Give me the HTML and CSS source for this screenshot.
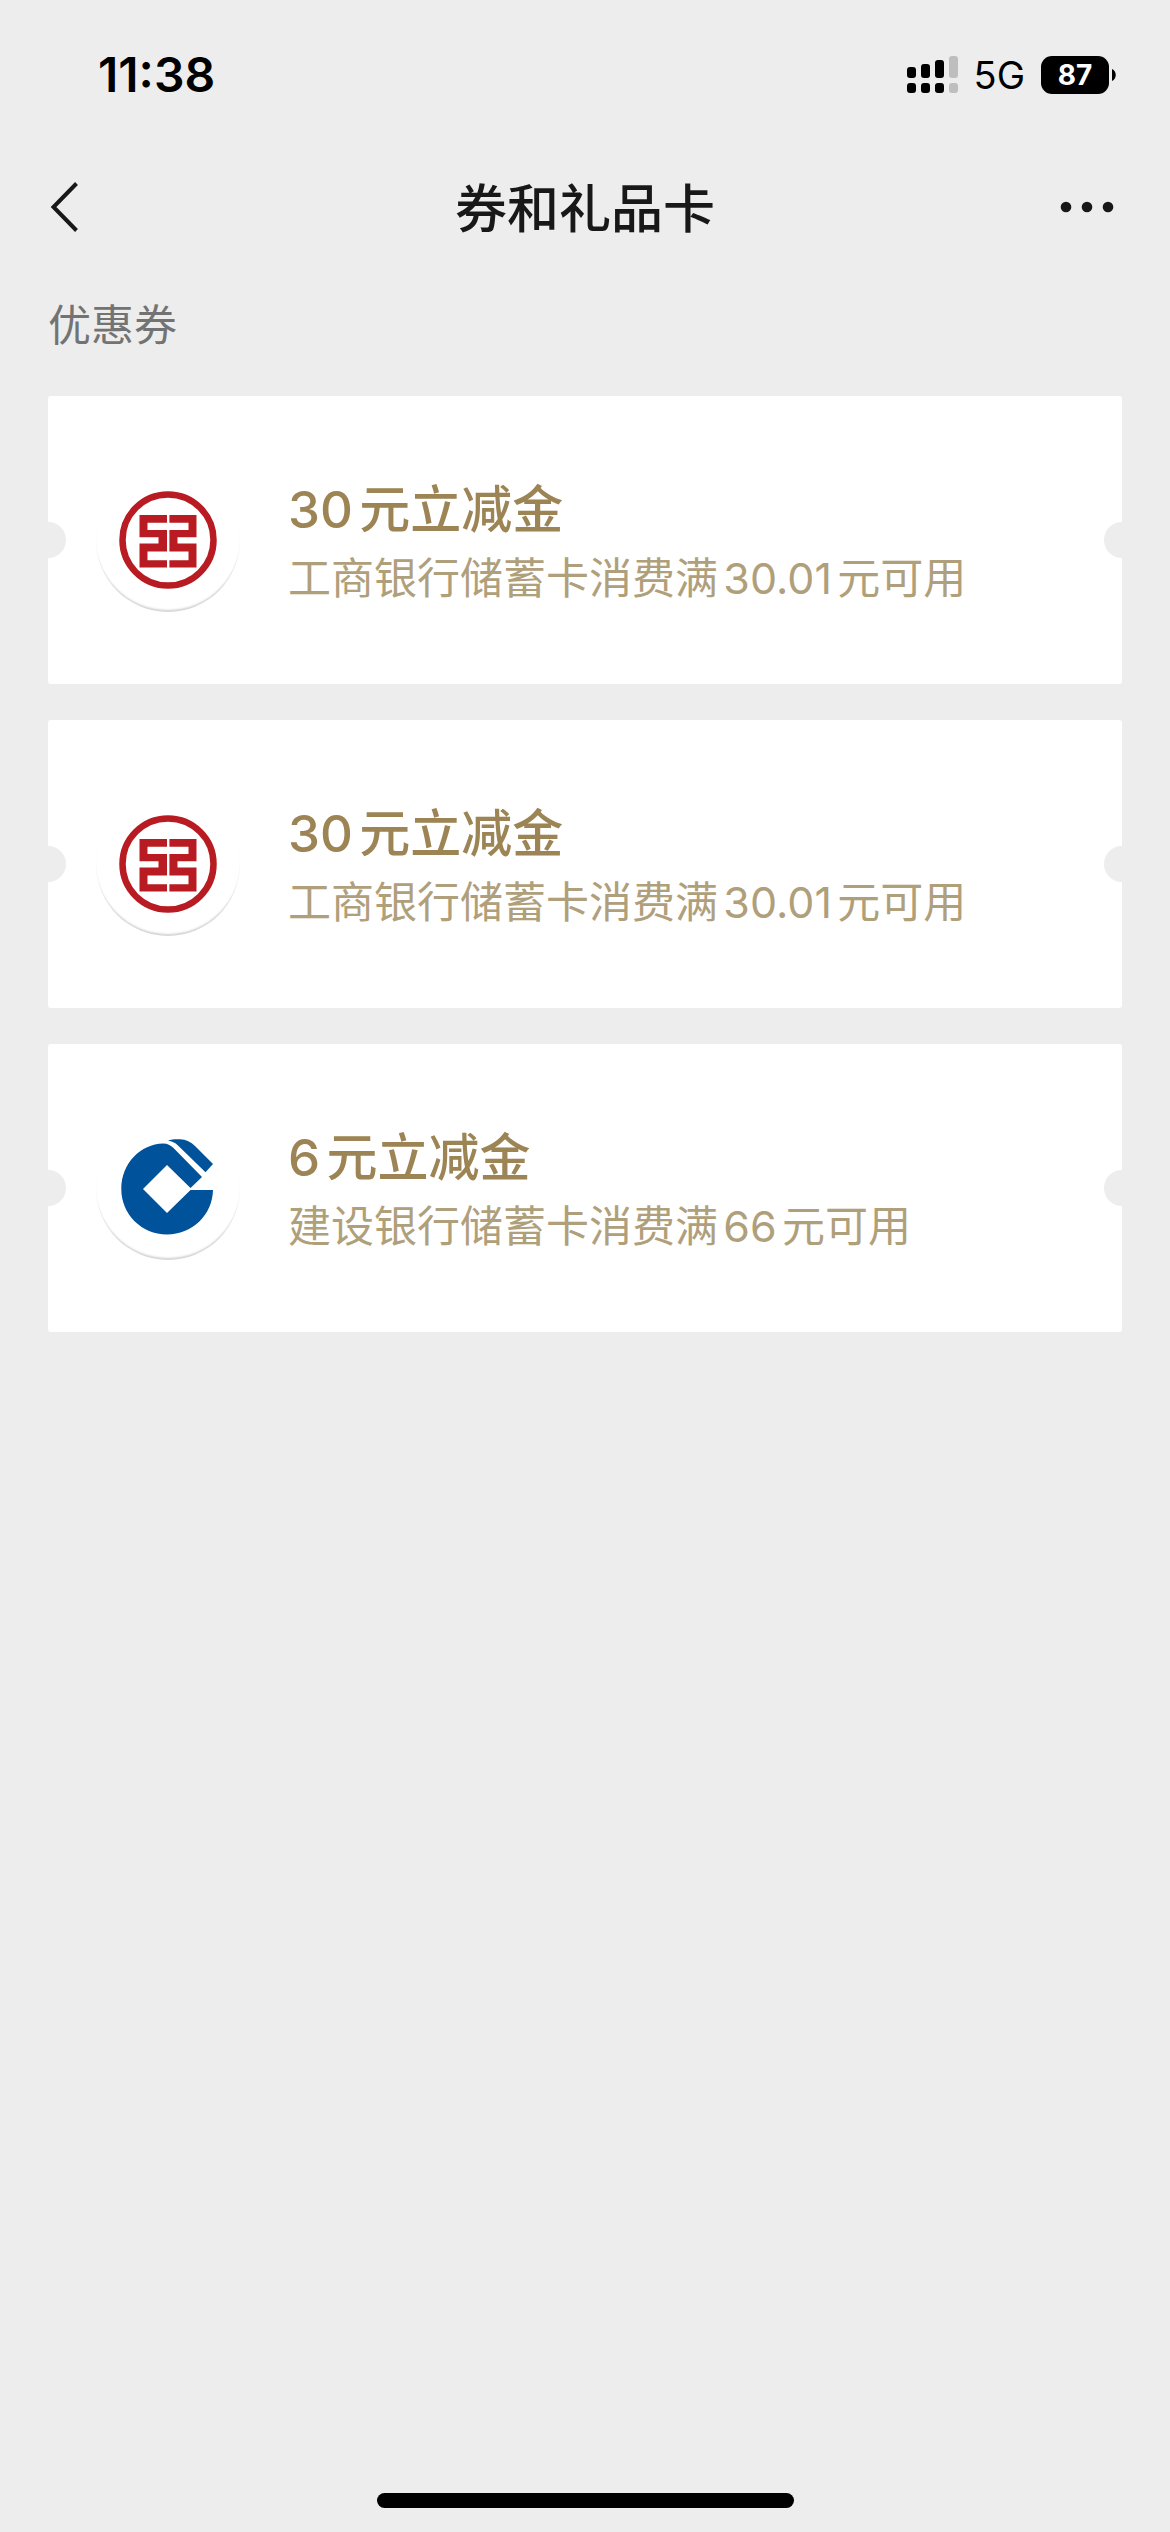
FILE: index.html
```html
<!DOCTYPE html>
<html lang="zh-CN">
  <head>
    <meta charset="UTF-8" />
    <title>券和礼品卡</title>
    <meta name="viewport" content="width=device-width, initial-scale=1.0" />
    <link rel="stylesheet" href="styles.css">
  </head>
  <body>
    <div class="status-bar">
      <span class="time">11:38</span>
      <div class="status-right">
        <svg class="signal" viewBox="0 0 51 37" aria-hidden="true">
          <rect x="0" y="11" width="9" height="11" rx="3" />
          <rect x="14" y="8" width="9" height="14" rx="3" />
          <rect x="28" y="4" width="9" height="18" rx="3" />
          <rect class="off" x="42" y="0" width="9" height="22" rx="3" />
          <rect x="0" y="27" width="9" height="10" rx="3" />
          <rect x="14" y="27" width="9" height="10" rx="3" />
          <rect x="28" y="27" width="9" height="10" rx="3" />
          <rect class="off" x="42" y="27" width="9" height="10" rx="3" />
        </svg>
        <span class="network">5G</span>
        <div class="battery">
          <span class="level">87</span>
          <svg class="battery-tip" viewBox="0 0 4 12" aria-hidden="true">
            <path d="M0 0C5 2 5 10 0 12Z" />
          </svg>
        </div>
      </div>
    </div>

    <header class="nav">
      <button class="nav-btn" type="button" aria-label="返回">
        <svg class="back-icon" viewBox="0 0 30 52" aria-hidden="true">
          <path d="M28.5 2.5L5.5 26L28.5 49.500" />
        </svg>
      </button>
      <h1>券和礼品卡</h1>
      <button class="nav-btn more" type="button" aria-label="更多">
        <svg class="more-icon" viewBox="0 0 54 12" aria-hidden="true">
          <circle cx="6" cy="6" r="5.3" />
          <circle cx="27" cy="6" r="5.3" />
          <circle cx="48" cy="6" r="5.3" />
        </svg>
      </button>
    </header>

    <main>
      <h2>优惠券</h2>

      <ul class="coupons">
        <li>
          <a class="coupon" href="#">
            <svg class="logo" viewBox="0 0 144 144" aria-hidden="true">
              <use href="#icbc" />
            </svg>
            <div class="info">
              <span class="name">30元立减金</span>
              <span class="desc">工商银行储蓄卡消费满30.01元可用</span>
            </div>
          </a>
        </li>
        <li>
          <a class="coupon" href="#">
            <svg class="logo" viewBox="0 0 144 144" aria-hidden="true">
              <use href="#icbc" />
            </svg>
            <div class="info">
              <span class="name">30元立减金</span>
              <span class="desc">工商银行储蓄卡消费满30.01元可用</span>
            </div>
          </a>
        </li>
        <li>
          <a class="coupon" href="#">
            <svg class="logo" viewBox="0 0 144 144" aria-hidden="true">
              <use href="#ccb" />
            </svg>
            <div class="info">
              <span class="name">6元立减金</span>
              <span class="desc">建设银行储蓄卡消费满66元可用</span>
            </div>
          </a>
        </li>
      </ul>
    </main>

    <div class="home-indicator"></div>

    <!-- bank logos -->
    <svg class="sprite" width="0" height="0" aria-hidden="true">
      <symbol id="icbc" viewBox="0 0 144 144">
        <circle cx="72" cy="72" r="45.5" fill="none" stroke="#b81c22" stroke-width="6.5" />
        <path
          fill="#b81c22"
          d="M71 47H43.5V69.3H62.5V75.5H43.5V99.5H71V92.3H51.5V83.5H71V62H51.5V54.7H71Z
             M73.4 47H100.5V69.3H81.5V75.5H100.5V99.5H73.4V92.3H92.5V83.5H73.4V62H92.5V54.7H73.4Z"
        />
      </symbol>
      <symbol id="ccb" viewBox="0 0 144 144">
        <path
          fill="#00529b"
          d="M106 61L94.5 72L71 49L47 73L71 97L94.5 74H117C116.5 99 96 118.5 71 118.5C45.5 118.5 25.3 98 25.3 73C25.3 47 45 28 67 27.5C72 27.5 75 29.5 78 32.5Z
             M72 24.7C75 23.4 79 23.2 84 23.3C90 23.5 95 26 99 30L117 48L109.5 56.3L82 29.5C79 26.5 76 25 72 24.7Z"
        />
      </symbol>
    </svg>
  </body>
</html>
```
FILE: styles.css
```css
* {
  box-sizing: border-box;
}

body {
  margin: 0;
  min-height: 100vh;
  display: flex;
  flex-direction: column;
  background: #ededed;
  color: #181818;
  font-family: Inter, "Noto Sans CJK SC", sans-serif;
  text-autospace: normal;
}

/* status bar */
.status-bar {
  display: flex;
  align-items: center;
  justify-content: space-between;
  height: 141px;
  padding: 8px 54px 0 98px;
  color: #000;
}

.time {
  font-size: 48px;
  font-weight: 600;
}

.status-right {
  display: flex;
  align-items: center;
  gap: 16px;
}

.signal {
  width: 51px;
  height: 37px;
}

.signal .off {
  fill: #bebebe;
}

.network {
  font-size: 38px;
}

.battery {
  display: flex;
  align-items: center;
  gap: 3px;
}

.level {
  width: 68px;
  border-radius: 11px;
  background: #000;
  color: #fff;
  font-size: 28px;
  font-weight: 700;
  line-height: 38px;
  text-align: center;
}

.battery-tip {
  width: 4px;
  height: 12px;
}

/* title bar */
.nav {
  display: flex;
  align-items: center;
  justify-content: space-between;
  height: 132px;
  padding: 0 48px;
}

.nav h1 {
  margin: 0;
  padding-bottom: 4px;
  font-size: 52px;
  font-weight: 500;
}

.nav-btn {
  display: flex;
  align-items: center;
  width: 96px;
  height: 96px;
  padding: 0;
  border: none;
  background: none;
  color: inherit;
  cursor: pointer;
}

.nav-btn.more {
  justify-content: flex-end;
  padding-right: 8px;
}

.back-icon {
  width: 30px;
  height: 52px;
  fill: none;
  stroke: currentColor;
  stroke-width: 4;
}

.more-icon {
  width: 54px;
  height: 12px;
  fill: currentColor;
}

/* coupon list */
main {
  flex: 1;
  padding: 0 48px;
}

h2 {
  margin: 0;
  padding: 20px 0 39px;
  color: #737373;
  font-size: 43px;
  font-weight: 400;
  line-height: 64px;
}

.coupons {
  display: flex;
  flex-direction: column;
  gap: 36px;
  margin: 0;
  padding: 0;
  list-style: none;
}

.coupon {
  position: relative;
  display: flex;
  align-items: center;
  gap: 48px;
  padding: 72px 48px;
  border-radius: 3px;
  background: #fff;
  text-decoration: none;
}

/* round notches on both edges */
.coupon::before,
.coupon::after {
  content: "";
  position: absolute;
  top: 50%;
  width: 18px;
  height: 36px;
  margin-top: -18px;
  background: #ededed;
}

.coupon::before {
  left: 0;
  border-radius: 0 18px 18px 0;
}

.coupon::after {
  right: 0;
  border-radius: 18px 0 0 18px;
}

.logo {
  flex: none;
  width: 144px;
  height: 144px;
  border-radius: 50%;
  box-shadow: inset 0 -3px 2px -1px #d4d4d4;
}

.info {
  display: flex;
  flex-direction: column;
  padding-top: 4px;
}

.name {
  color: #9c8455;
  font-size: 51px;
  font-weight: 500;
  line-height: 72px;
}

.desc {
  color: #b09f7b;
  font-size: 43px;
  line-height: 64px;
}

.home-indicator {
  width: 417px;
  height: 15px;
  margin: 0 auto 24px;
  border-radius: 8px;
  background: #000;
}

.sprite {
  position: absolute;
}
```
